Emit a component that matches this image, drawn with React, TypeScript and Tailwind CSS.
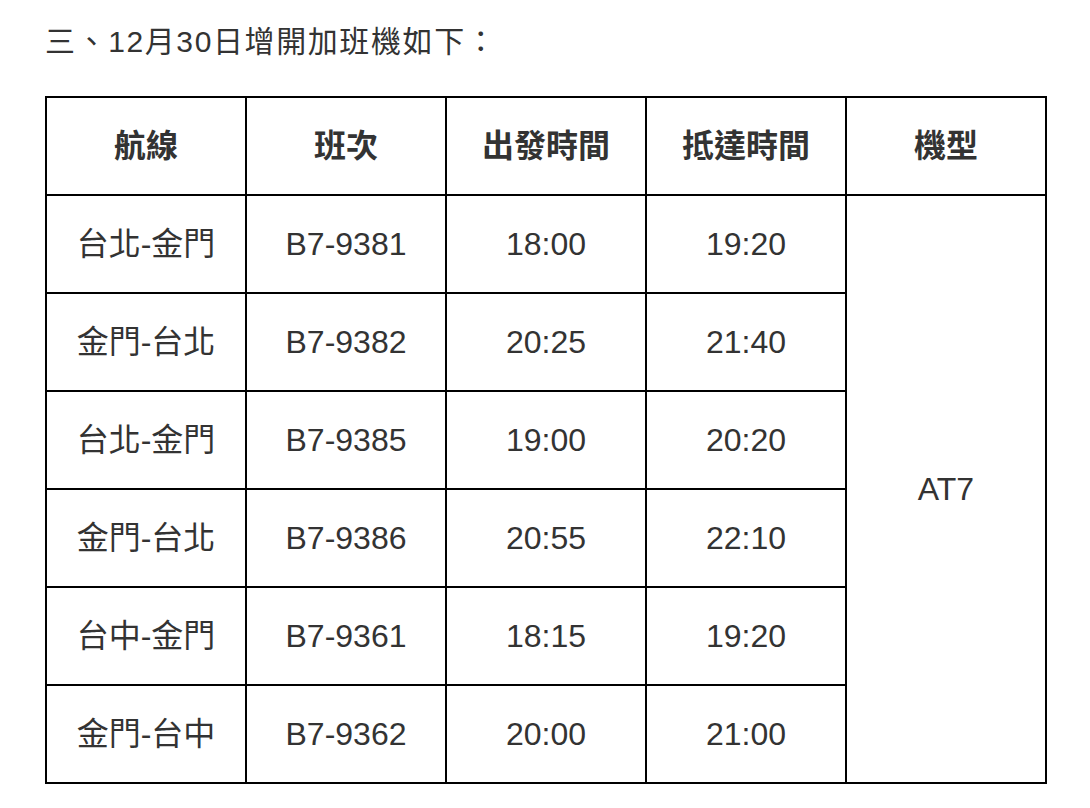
const rows = [
  ["台北-金門", "B7-9381", "18:00", "19:20"],
  ["金門-台北", "B7-9382", "20:25", "21:40"],
  ["台北-金門", "B7-9385", "19:00", "20:20"],
  ["金門-台北", "B7-9386", "20:55", "22:10"],
  ["台中-金門", "B7-9361", "18:15", "19:20"],
  ["金門-台中", "B7-9362", "20:00", "21:00"],
];

const headers = ["航線", "班次", "出發時間", "抵達時間", "機型"];

export default function App() {
  return (
    <div
      className="min-h-screen bg-white text-[#333333] pt-[20px] pl-[45px]"
      style={{ fontFamily: '"Liberation Sans", "Noto Sans CJK TC", sans-serif' }}
    >
      <p className="text-[30px] leading-[44px] tracking-[1.6px]">三、12月30日增開加班機如下：</p>
      <table className="mt-[32px] border-collapse border-2 border-black text-[32px] text-center">
        <thead>
          <tr>
            {headers.map((h) => (
              <th key={h} className="w-[200px] h-[98px] border-2 border-black font-bold">
                {h}
              </th>
            ))}
          </tr>
        </thead>
        <tbody>
          {rows.map((r, i) => (
            <tr key={i}>
              {r.map((c, j) => (
                <td key={j} className="w-[200px] h-[98px] border-2 border-black">
                  {c}
                </td>
              ))}
              {i === 0 && (
                <td rowSpan={6} className="w-[200px] border-2 border-black">
                  AT7
                </td>
              )}
            </tr>
          ))}
        </tbody>
      </table>
    </div>
  );
}
